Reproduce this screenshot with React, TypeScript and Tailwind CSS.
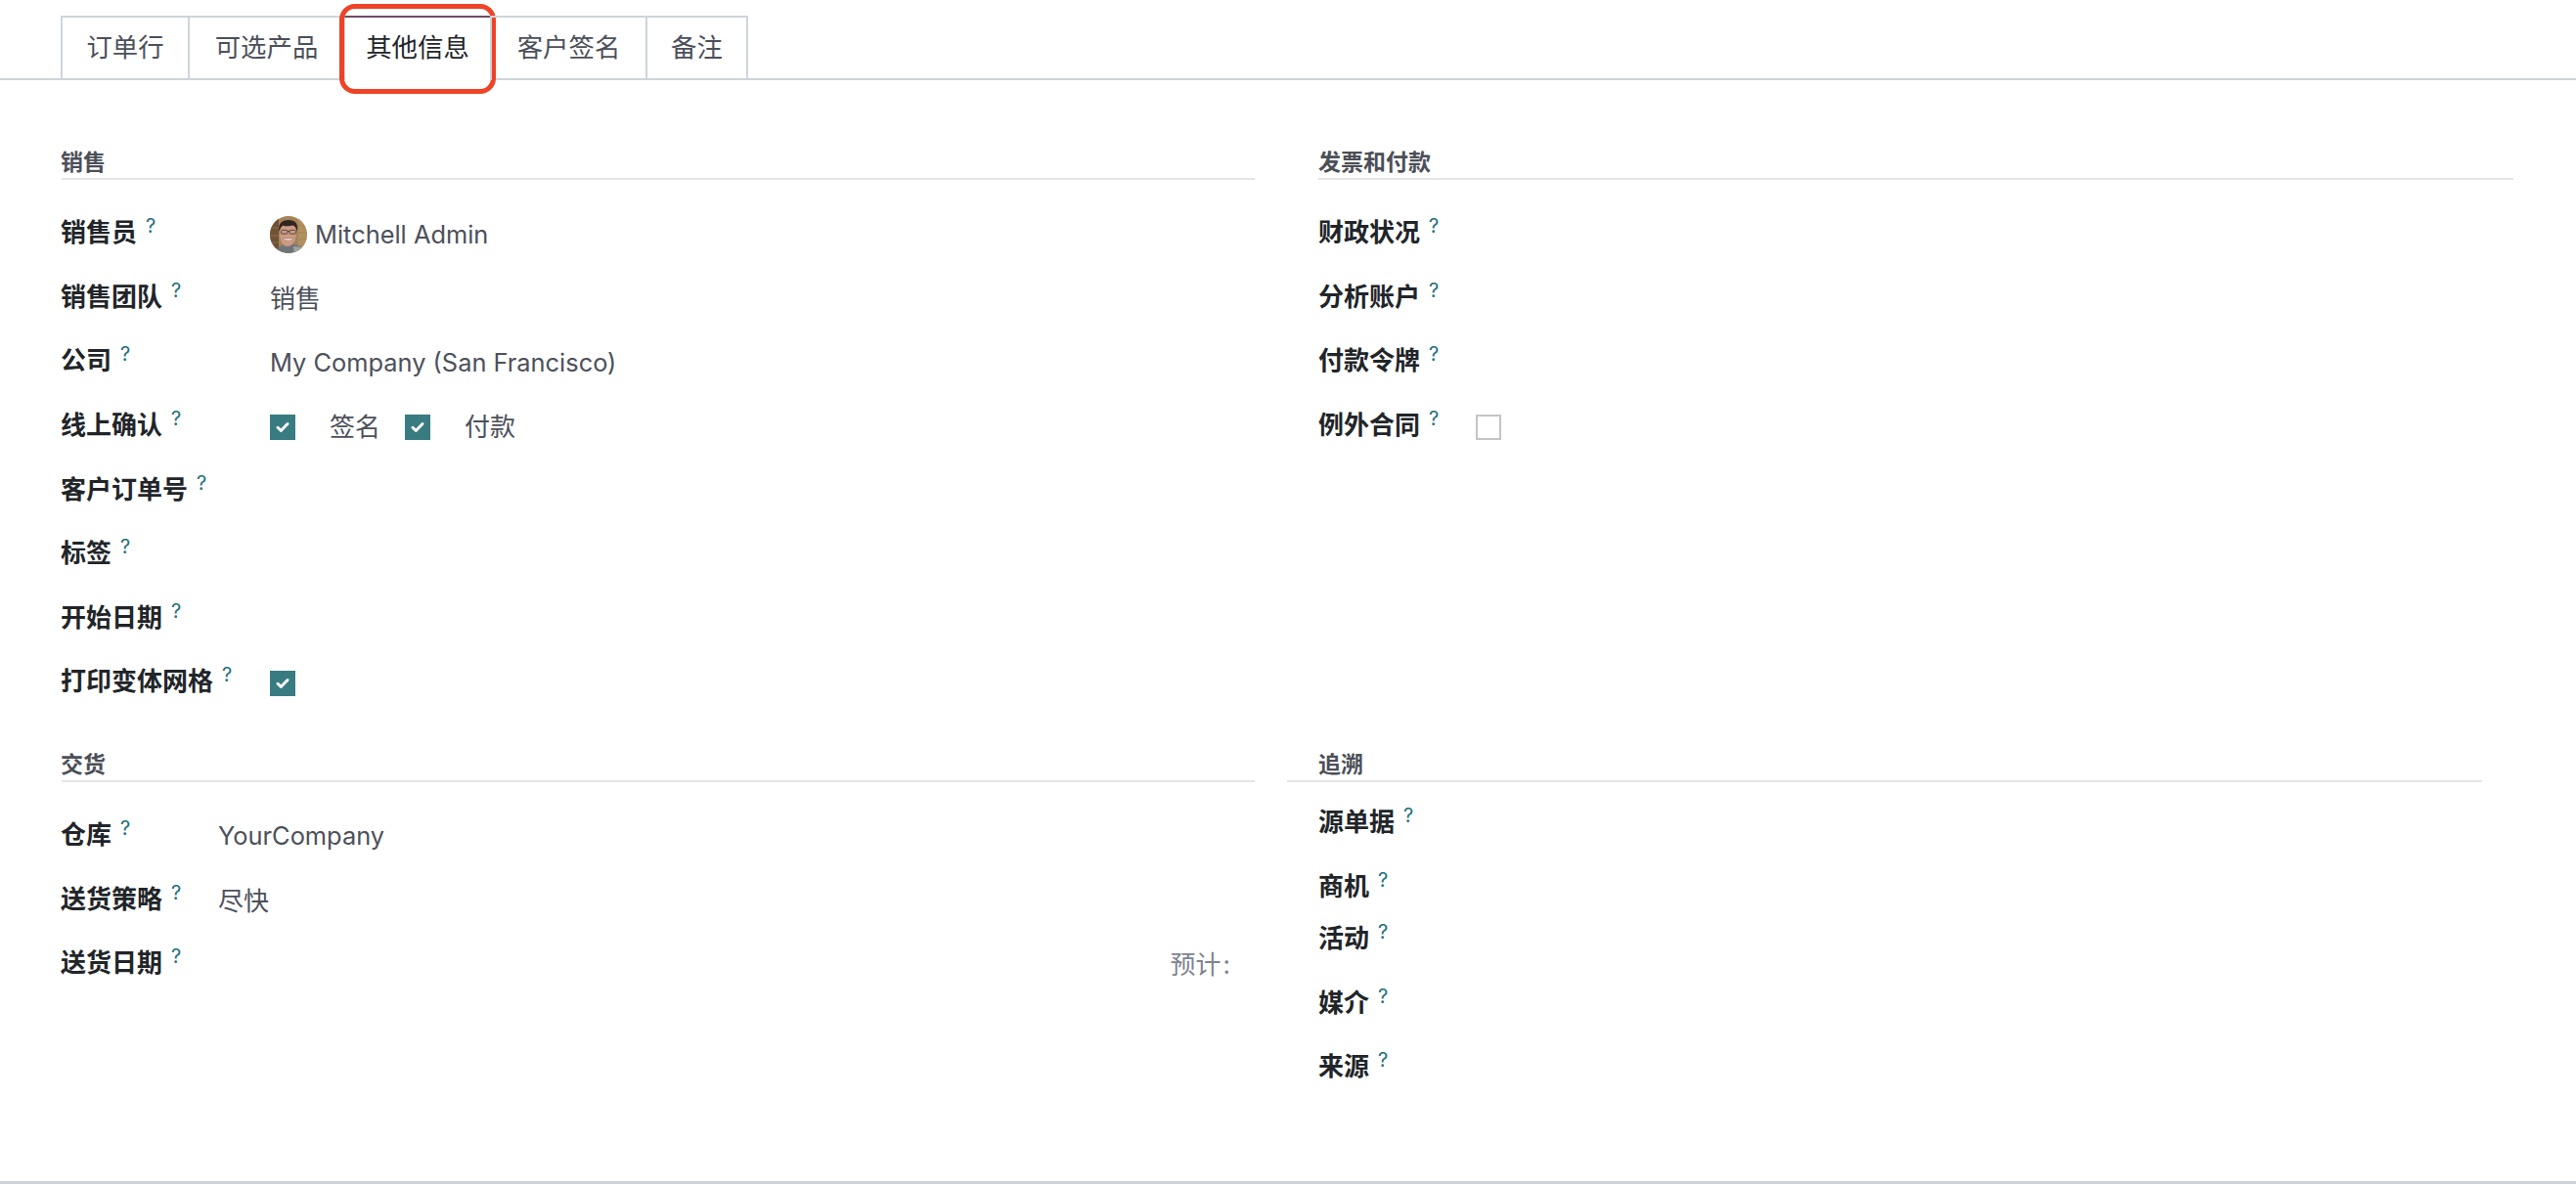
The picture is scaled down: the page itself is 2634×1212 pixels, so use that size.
const cjk = "font-['Inter','Noto_Sans_CJK_SC',sans-serif]";

function Help() {
  return <sup className="ml-[9px] top-[-9px] align-baseline text-[20px] font-normal text-[#24707a]">?</sup>;
}

function Checkbox({ checked = true }: { checked?: boolean }) {
  if (!checked) {
    return <span className="block h-[26px] w-[26px] border-2 border-[#c4c4c4] bg-white" />;
  }
  return (
    <span className="flex h-[26px] w-[26px] items-center justify-center bg-[#387c81]">
      <svg width="14" height="12" viewBox="0 0 14 12" fill="none">
        <path d="M2 6.2 5.3 9.4 12 2.6" stroke="#fff" strokeWidth="2.9" strokeLinecap="round" strokeLinejoin="round" />
      </svg>
    </span>
  );
}

function Avatar() {
  return (
    <svg width="38" height="38" viewBox="0 0 38 38" className="shrink-0">
      <defs>
        <clipPath id="avatar-clip">
          <circle cx="19" cy="19" r="19" />
        </clipPath>
      </defs>
      <g clipPath="url(#avatar-clip)">
        <rect width="38" height="38" fill="#a5835a" />
        <rect x="0" y="0" width="9" height="38" fill="#6f5336" />
        <path d="M0 12h10M0 20h9M0 27h8M29 10h9M29 17h9M30 24h8" stroke="#8c6d48" strokeWidth="1.2" />
        <rect x="29" y="2" width="9" height="28" fill="#bb9a66" fillOpacity=".55" />
        <path d="M6 38c1-6 6-9 12-9l7 0c5 1 9 4 10 9z" fill="#6f7576" />
        <path d="M24 31l8 1 2 6h-9z" fill="#9ea5a8" />
        <path d="M10 17c0-7 4-10 9-10s8 3 8 10c0 8-4 14-9 14s-8-6-8-14z" fill="#cc9a84" />
        <path d="M9.500 16C8 8 12 4 19 4s10.500 4 8.800 12c-.6-3.500-2-5.500-4-6.500-3.500 1-7.500 1-10.500.2C11.300 11 10.300 13 9.500 16z" fill="#2f2620" />
        <rect x="11.500" y="14.400" width="6.500" height="3.800" rx="1.200" fill="none" stroke="#3c3631" strokeWidth=".8" />
        <rect x="20" y="14.400" width="6.500" height="3.800" rx="1.200" fill="none" stroke="#3c3631" strokeWidth=".8" />
        <path d="M18 15.500h2" stroke="#3c3631" strokeWidth=".8" />
        <path d="M13 22.500c2.500 3.500 9 3.500 11.500 0-3 .8-8 .8-11.500 0z" fill="#f4ebe3" stroke="#8a5244" strokeWidth=".4" />
      </g>
    </svg>
  );
}

function Row({ label, children, width, className = "" }: { label: string; children?: React.ReactNode; width: string; className?: string }) {
  return (
    <div className={`flex h-[65.6px] items-center ${className}`}>
      <div className={`shrink-0 text-[26px] font-bold text-[#212529] ${width}`}>
        {label}
        <Help />
      </div>
      {children}
    </div>
  );
}

function Heading({ title, className = "" }: { title: string; className?: string }) {
  return (
    <div className={`h-[32px] border-b-2 border-[#e4e5e6] text-[23px] font-bold leading-[28px] text-[#4b4f58] ${className}`}>
      {title}
    </div>
  );
}

const valueText = "mt-[4px] text-[26px] text-[#4c505b]";
// Latin values run a little narrower than the 26px CJK next to them
const latinText = "mt-[4px] text-[25.4px] text-[#4c505b]";

export default function App() {
  const tabs = [
    { name: "订单行", w: "w-[132px]" },
    { name: "可选产品", w: "w-[161px]" },
    { name: "其他信息", w: "w-[152px]", active: true },
    { name: "客户签名", w: "w-[161px]" },
    { name: "备注", w: "w-[105px]" },
  ];

  return (
    <div className={`flex h-[1212px] w-[2634px] flex-col overflow-hidden bg-white ${cjk}`}>
      <div className="flex h-[82px] border-b-2 border-[#ced4da] pl-[62px] pt-[16px]">
        {tabs.map((t) => (
          <div
            key={t.name}
            className={`relative -mr-[2px] flex h-[66px] items-center justify-center border-2 border-b-0 text-[26.4px] ${t.w} ${
              t.active ? "border-t-[#714b67] border-x-[#ced4da] bg-white text-[#212529]" : "border-[#ced4da] text-[#4c505b]"
            }`}
          >
            <span className="-mt-[3px]">{t.name}</span>
            {t.active && (
              <span className="absolute -left-[6px] -right-[6px] -top-[14px] bottom-[-14px] rounded-[16px] border-[5px] border-[#ef4226]" />
            )}
          </div>
        ))}
      </div>

      <div className="grid grid-cols-[1220px_1222px] gap-x-[65px] pl-[63px] pt-[70px]">
        <section>
          <Heading title="销售" className="-indent-[1px]" />
          <div className="-ml-[1px] mt-[21px]">
            <Row label="销售员" width="w-[214px]">
              <span className={`${latinText} flex items-center gap-[8px]`}>
                <Avatar />
                Mitchell Admin
              </span>
            </Row>
            <Row label="销售团队" width="w-[214px]">
              <span className={valueText}>销售</span>
            </Row>
            <Row label="公司" width="w-[214px]">
              <span className={latinText}>My Company (San Francisco)</span>
            </Row>
            <Row label="线上确认" width="w-[214px]">
              <span className="mt-[5px] flex items-center text-[26px] text-[#4c505b]">
                <Checkbox />
                <span className="ml-[35px] mr-[25px] -mt-[2px]">签名</span>
                <Checkbox />
                <span className="ml-[35px] -mt-[2px]">付款</span>
              </span>
            </Row>
            <Row label="客户订单号" width="w-[214px]" />
            <Row label="标签" width="w-[214px]" />
            <Row label="开始日期" width="w-[214px]" />
            <Row label="打印变体网格" width="w-[214px]">
              <span className="mt-[4px]">
                <Checkbox />
              </span>
            </Row>
          </div>
        </section>
        <section>
          <Heading title="发票和付款" />
          <div className="mt-[21px]">
            <Row label="财政状况" width="w-[161px]" />
            <Row label="分析账户" width="w-[161px]" />
            <Row label="付款令牌" width="w-[161px]" />
            <Row label="例外合同" width="w-[161px]">
              <span className="mt-[5px]">
                <Checkbox checked={false} />
              </span>
            </Row>
          </div>
        </section>
      </div>

      <div className="grid grid-cols-[1220px_1222px] gap-x-[33px] pl-[63px] pt-[38px]">
        <section>
          <Heading title="交货" className="-indent-[1px]" />
          <div className="-ml-[1px] mt-[21px]">
            <Row label="仓库" width="w-[161px]">
              <span className={latinText}>YourCompany</span>
            </Row>
            <Row label="送货策略" width="w-[161px]">
              <span className={valueText}>尽快</span>
            </Row>
            <Row label="送货日期" width="w-[161px]" className="justify-between pr-[25px]">
              <span className="mt-[4px] text-[26px] text-[#80848e]">
                预计<span className="ml-[2px]">:</span>
              </span>
            </Row>
          </div>
        </section>
        <section>
          <Heading title="追溯" className="pl-[32px]" />
          <div className="mt-[8px] pl-[32px]">
            <Row label="源单据" width="w-[160px]" />
            <Row label="商机" width="w-[160px]" />
            <Row label="活动" width="w-[160px]" className="-mt-[12px]" />
            <Row label="媒介" width="w-[160px]" />
            <Row label="来源" width="w-[160px]" />
          </div>
        </section>
      </div>

      <div className="mb-[1px] mt-auto h-[3px] bg-[#ced4da]" />
    </div>
  );
}
